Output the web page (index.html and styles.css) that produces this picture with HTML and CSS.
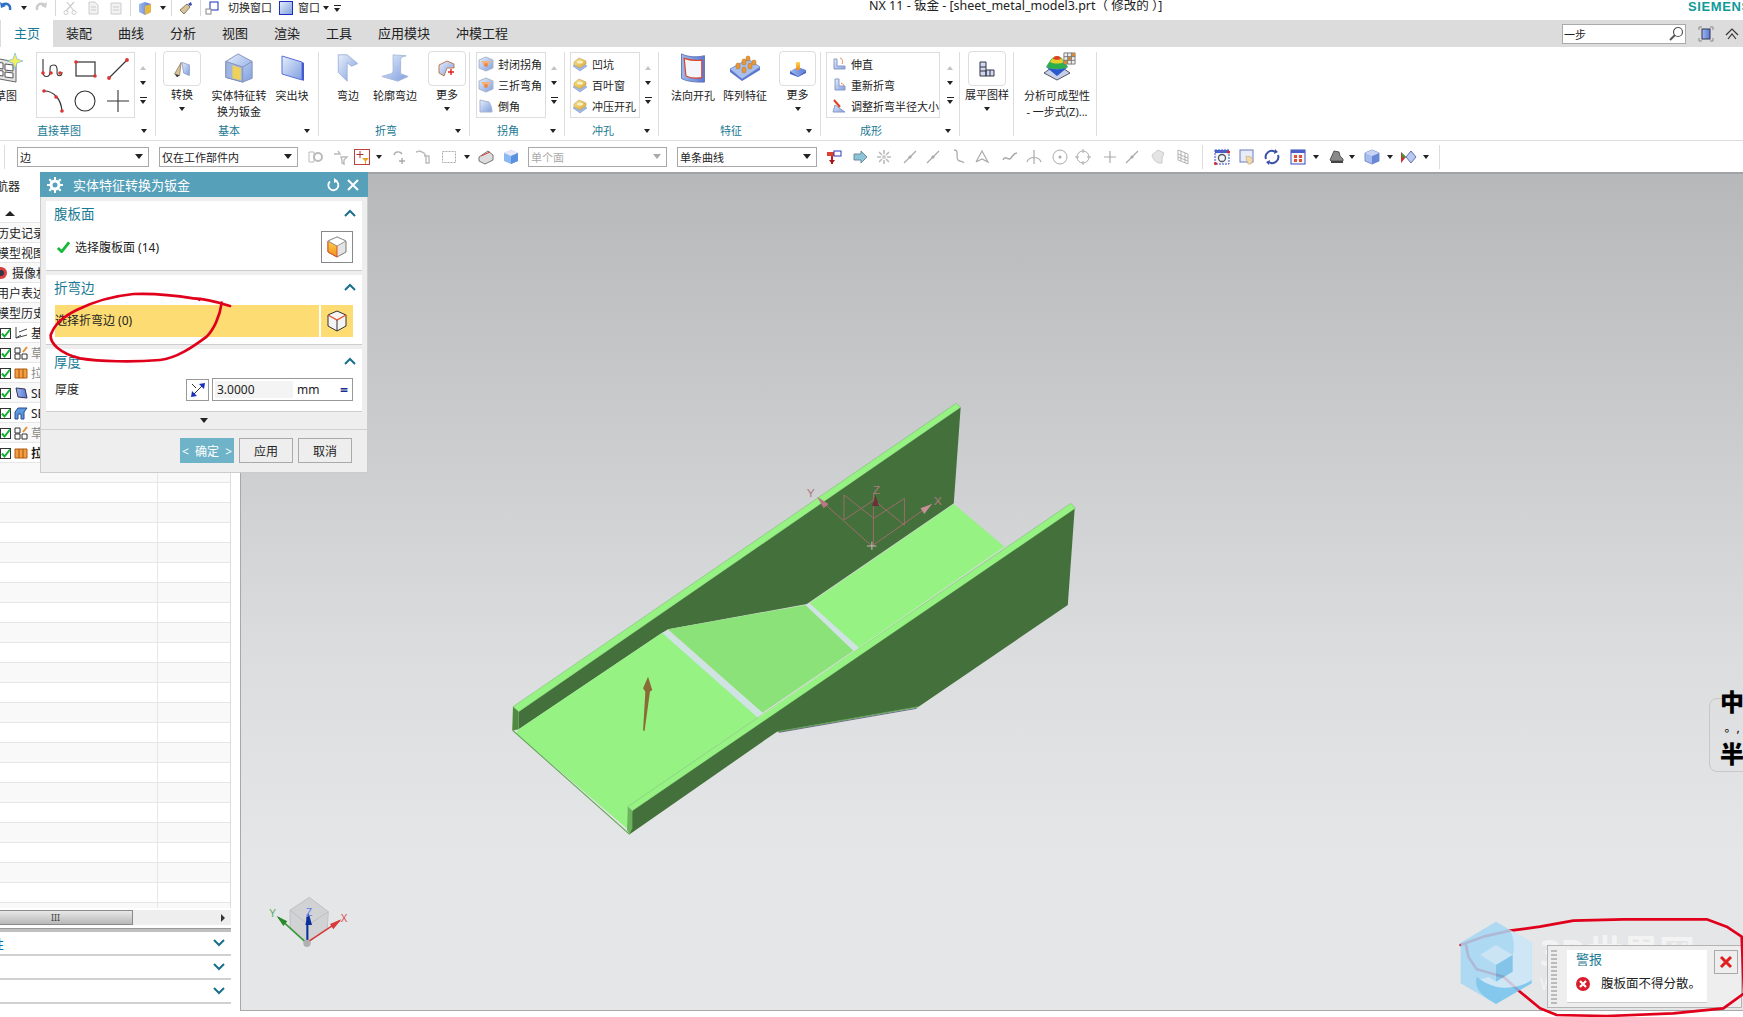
FILE: index.html
```html
<!DOCTYPE html>
<html lang="zh">
<head>
<meta charset="utf-8">
<title>NX 11 - 钣金</title>
<link rel="stylesheet" href="styles.css">
</head>
<body>
<svg class="defs" aria-hidden="true">
  <defs>
    <linearGradient id="gB" x1="0" y1="0" x2="1" y2="1"><stop offset="0" stop-color="#e6eefb"/><stop offset="1" stop-color="#7f9fe0"/></linearGradient>
    <linearGradient id="gB2" x1="0" y1="0" x2="1" y2="0"><stop offset="0" stop-color="#9fb9ea"/><stop offset="1" stop-color="#5a78d8"/></linearGradient>
    <linearGradient id="gY" x1="0" y1="0" x2="1" y2="1"><stop offset="0" stop-color="#fbe48a"/><stop offset="1" stop-color="#d9a93a"/></linearGradient>
    <linearGradient id="gO" x1="0" y1="0" x2="0" y2="1"><stop offset="0" stop-color="#ffd44a"/><stop offset="1" stop-color="#f08a20"/></linearGradient>
    <symbol id="corner" viewBox="0 0 16 16"><path d="M8 1l7 3v8l-7 3-7-3V4z" fill="url(#gB)" stroke="#a9b6cc"/><path d="M3 5h10l-3 4H6z" fill="#f2b27a"/><circle cx="8" cy="9" r="2" fill="#e88a4a"/></symbol>
    <symbol id="punch" viewBox="0 0 16 16"><path d="M8 6l7 4-7 5-7-5z" fill="#9fb9ea" stroke="#7f9bd0" stroke-width=".6"/><path d="M2 6l5-4 7 3v3l-6 4-6-3z" fill="url(#gY)" stroke="#b8a060" stroke-width=".6"/><ellipse cx="8" cy="6" rx="3" ry="1.6" fill="#f8f0c8"/></symbol>
    <symbol id="cross" viewBox="0 0 16 16"><path d="M8 2v12M2 8h12" stroke="#aaa" stroke-width="1.2" fill="none"/></symbol>
    <symbol id="line" viewBox="0 0 16 16"><path d="M2 14 14 2" stroke="#aaa" stroke-width="1.2"/><circle cx="8" cy="8" r="1.6" fill="#aaa"/></symbol>
    <symbol id="cbx" viewBox="0 0 11 11"><rect x=".5" y=".5" width="10" height="10" fill="#fff" stroke="#333"/><path d="M2 5.5 4.5 8.5 10 1.5" fill="none" stroke="#10b030" stroke-width="2"/></symbol>
    <symbol id="ext" viewBox="0 0 14 14"><path d="M1 3h12v9H1z" fill="#f0a040" stroke="#b05a10"/><path d="M5 3v9M9 3v9" stroke="#a85010"/></symbol>
    <symbol id="skt" viewBox="0 0 14 14"><path d="M1 2h5v5H1zM1 8h5v5H1zM8 8h5v5H8z" fill="#fff" stroke="#333"/><path d="M9 6l4-5" stroke="#e09030" stroke-width="2"/></symbol>
    <symbol id="chev" viewBox="0 0 12 8"><path d="M1 7 6 2l5 5" fill="none" stroke="#1a6f8c" stroke-width="2"/></symbol>
    <symbol id="chevd" viewBox="0 0 12 8"><path d="M1 1l5 5 5-5" fill="none" stroke="#1a6f8c" stroke-width="2"/></symbol>
  </defs>
</svg>

<div class="app">
  <header class="topbar">
    <div class="qa">
      <svg class="s14" viewBox="0 0 14 14"><path d="M3 4c5-3 9 0 8 5" fill="none" stroke="#2d6fc8" stroke-width="2.4"/><path d="M1 1l1 6 5-2z" fill="#2d6fc8"/></svg>
      <i class="dd"></i>
      <svg class="s14" viewBox="0 0 14 14"><path d="M11 4C6 1 2 4 3 9" fill="none" stroke="#ccc" stroke-width="2.4"/><path d="M13 1l-1 6-5-2z" fill="#ccc"/></svg>
      <b class="vsep"></b>
      <svg class="s14" viewBox="0 0 14 14"><path d="M3 10 11 1M11 10 4 1" stroke="#ccc" stroke-width="1.2"/><circle cx="3" cy="11.500" r="2" fill="none" stroke="#ccc"/><circle cx="11" cy="11.500" r="2" fill="none" stroke="#ccc"/></svg>
      <svg class="s14" viewBox="0 0 14 14"><path d="M2 1h6l3 3v9H2z" fill="#f2f2f2" stroke="#ccc"/><path d="M4 6h5M4 9h5" stroke="#ccc"/></svg>
      <svg class="s14" viewBox="0 0 14 14"><path d="M2 2h10v11H2z" fill="#f2f2f2" stroke="#ccc"/><path d="M4 6h6M4 9h6" stroke="#ccc"/></svg>
      <b class="vsep"></b>
      <svg class="s14" viewBox="0 0 14 14"><path d="M7 1l6 2v8l-6 3-6-3V3z" fill="url(#gB2)"/><path d="M7 5l6-2v8l-6 3z" fill="#e8b83a"/></svg>
      <i class="dd"></i>
      <b class="vsep"></b>
      <svg class="s14" viewBox="0 0 14 14"><path d="M1 9l7-6 3 3-6 7z" fill="#d8c49a" stroke="#8a7a60"/><path d="M9 3l3-2 1 3-2 1z" fill="#3a4ab0"/></svg>
      <b class="vsep"></b>
      <svg class="s14" viewBox="0 0 14 14"><rect x="5" y="1" width="8" height="8" fill="#fff" stroke="#1a2ec0"/><rect x="1" y="8" width="5" height="5" fill="#fff" stroke="#888"/></svg>
      <span class="qt">切换窗口</span>
      <svg class="s14" viewBox="0 0 14 14"><rect x=".5" y=".5" width="13" height="13" fill="url(#gB)" stroke="#1a2ec0"/></svg>
      <span class="qt">窗口</span>
      <i class="dd"></i>
      <i class="dd lined"></i>
    </div>
    <div class="title">NX 11 - 钣金 - [sheet_metal_model3.prt（&nbsp;修改的&nbsp;）]</div>
    <div class="brand">SIEMENS</div>
  </header>

  <nav class="tabs">
    <a class="tab on">主页</a><a class="tab">装配</a><a class="tab">曲线</a><a class="tab">分析</a><a class="tab">视图</a><a class="tab">渲染</a><a class="tab">工具</a><a class="tab">应用模块</a><a class="tab">冲模工程</a>
    <div class="tab-right">
      <div class="search"><span>一步</span><svg class="s16" viewBox="0 0 16 16"><circle cx="10" cy="6" r="4.5" fill="#fff" stroke="#555" stroke-width="1.2"/><path d="M7 9l-5 5" stroke="#555" stroke-width="2"/></svg></div>
      <svg class="s16" viewBox="0 0 16 16"><path d="M1 4V1h3M12 1h3v3M15 12v3h-3M4 15H1v-3" fill="none" stroke="#888"/><rect x="4" y="3" width="8" height="10" fill="url(#gB2)" stroke="#335"/></svg>
      <svg class="s14" viewBox="0 0 14 14"><path d="M1 8l6-6 6 6M3 12l4-5 4 5" fill="none" stroke="#333" stroke-width="1.2"/></svg>
    </div>
  </nav>

  <section class="ribbon">
    <div class="grp g1">
      <div class="body">
        <div class="lg sketch">
          <div class="ic"><svg class="s32" viewBox="0 0 32 30"><path d="M4 5l22 4v20L4 25z" fill="#e4e4e4" stroke="#666"/><path d="M6 9l7 1v6l-7-1zM15 11l8 1v6l-8-1zM6 17l7 1v5l-7-1zM15 19l8 1v5l-8-1z" fill="#fff" stroke="#555"/><path d="M25 0l2 6 6 2-6 2-2 6-2-6-6-2 6-2z" fill="#f4ef60" stroke="#5fb0e0" stroke-width=".6"/></svg></div>
          <span>草图</span>
        </div>
        <div class="gal-grid">
          <svg class="s24" viewBox="0 0 24 24"><path d="M2 2v13c0 6 7 6 7 0s0-7 4-7 3 7 3 7c0 5 5 5 5 0" fill="none" stroke="#333" stroke-width="1.1"/><circle cx="2" cy="16" r="1.8" fill="#d33"/><circle cx="10" cy="16" r="1.8" fill="#d33"/><circle cx="19" cy="16" r="1.8" fill="#d33"/></svg>
          <svg class="s24" viewBox="0 0 24 24"><rect x="3" y="5" width="19" height="14" fill="none" stroke="#333" stroke-width="1.2"/><circle cx="3" cy="5" r="1.8" fill="#d33"/><circle cx="22" cy="19" r="1.8" fill="#d33"/></svg>
          <svg class="s24" viewBox="0 0 24 24"><path d="M3 21 21 3" stroke="#333" stroke-width="1.1"/><circle cx="3" cy="21" r="1.9" fill="#d33"/><circle cx="21" cy="3" r="1.9" fill="#d33"/></svg>
          <svg class="s24" viewBox="0 0 24 24"><path d="M3 2c10 0 17 8 18 20" fill="none" stroke="#333" stroke-width="1.2"/><circle cx="3" cy="2" r="1.8" fill="#d33"/><circle cx="15" cy="8" r="1.8" fill="#d33"/><circle cx="21" cy="22" r="1.8" fill="#d33"/></svg>
          <svg class="s24" viewBox="0 0 24 24"><circle cx="12" cy="12" r="10" fill="none" stroke="#333" stroke-width="1.1"/></svg>
          <svg class="s24" viewBox="0 0 24 24"><path d="M12 1v22M1 12h22" stroke="#333" stroke-width="1.1"/></svg>
        </div>
        <div class="scr"><i class="up"></i><i class="dd"></i><i class="dd lined"></i></div>
      </div>
      <div class="foot"><span>直接草图</span><i class="dd"></i></div>
    </div>

    <div class="grp g2">
      <div class="body">
        <div class="lg w38">
          <div class="ic box"><svg class="s18" viewBox="0 0 22 22"><path d="M11 3l9 3v13l-7-3z" fill="url(#gB)" stroke="#8a9ac8"/><path d="M10 3 2 17l6 2z" fill="#d8c49a" stroke="#8a7a60"/><path d="M2 17l6 2-3 2z" fill="#333"/></svg></div>
          <span>转换</span><i class="dd"></i>
        </div>
        <div class="lg w58">
          <div class="ic"><svg class="s32" viewBox="0 0 32 32"><path d="M2 9 15 1l15 8v18l-10 4-18-5z" fill="url(#gB)" stroke="#7f8fb8"/><path d="M2 9l18 6v16L2 26z" fill="#9fb6e0" stroke="#7f8fb8"/><path d="M9 13l9 3v13l-9-2z" fill="#efd05a"/><path d="M20 15l10-6" stroke="#7f8fb8"/></svg></div>
          <span>实体特征转</span><span>换为钣金</span>
        </div>
        <div class="lg w36">
          <div class="ic"><svg class="s28" viewBox="0 0 28 28"><path d="M4 2l20 6v18L4 20z" fill="url(#gB)" stroke="#5a70d8"/><path d="M24 8l2 1v18l-2-1z" fill="#4458d0"/></svg></div>
          <span>突出块</span>
        </div>
      </div>
      <div class="foot"><span>基本</span><i class="dd"></i></div>
    </div>

    <div class="grp g3">
      <div class="body">
        <div class="lg w30">
          <div class="ic"><svg class="s28" viewBox="0 0 28 34"><path d="M3 2h10l12 10-7 3-5-4v21L3 22z" fill="url(#gB)" stroke="#9fb0d8"/></svg></div>
          <span>弯边</span>
        </div>
        <div class="lg w50">
          <div class="ic"><svg class="s32" viewBox="0 0 34 32"><path d="M15 2l14 1c-6 1-6 3-6 6v13l8 3-11 5L3 25l10-3c2-1 2-3 2-5z" fill="url(#gB)" stroke="#a8b8d8"/></svg></div>
          <span>轮廓弯边</span>
        </div>
        <div class="lg w38">
          <div class="ic box"><svg class="s18" viewBox="0 0 18 18"><path d="M1 5l8-4 7 3v4H9l-3 8-5-3z" fill="url(#gB)" stroke="#c07a50"/><path d="M10 12h6M13 9v6" stroke="#e02020" stroke-width="1.4"/></svg></div>
          <span>更多</span><i class="dd"></i>
        </div>
      </div>
      <div class="foot"><span>折弯</span><i class="dd"></i></div>
    </div>

    <div class="grp g4">
      <div class="body">
        <div class="gal w70">
          <div class="gr"><svg class="s16"><use href="#corner"/></svg><span>封闭拐角</span></div>
          <div class="gr"><svg class="s16"><use href="#corner"/></svg><span>三折弯角</span></div>
          <div class="gr"><svg class="s16" viewBox="0 0 16 16"><path d="M2 2l9 2c2 3 3 6 3 10H2z" fill="url(#gB)" stroke="#a9b6cc"/></svg><span>倒角</span></div>
        </div>
        <div class="scr"><i class="up"></i><i class="dd"></i><i class="dd lined"></i></div>
      </div>
      <div class="foot"><span>拐角</span><i class="dd"></i></div>
    </div>

    <div class="grp g5">
      <div class="body">
        <div class="gal w70">
          <div class="gr"><svg class="s16"><use href="#punch"/></svg><span>凹坑</span></div>
          <div class="gr"><svg class="s16"><use href="#punch"/></svg><span>百叶窗</span></div>
          <div class="gr"><svg class="s16"><use href="#punch"/></svg><span>冲压开孔</span></div>
        </div>
        <div class="scr"><i class="up"></i><i class="dd"></i><i class="dd lined"></i></div>
      </div>
      <div class="foot"><span>冲孔</span><i class="dd"></i></div>
    </div>

    <div class="grp g6">
      <div class="body">
        <div class="lg w46">
          <div class="ic"><svg class="s32" viewBox="0 0 30 34"><path d="M2 1c8 4 18 4 26 2v30C20 33 10 33 2 29z" fill="url(#gB2)" stroke="#5a70b0"/><path d="M5 6c6 2 14 3 20 2v20c-6 1-14 0-18-2z" fill="#f4f6fc" stroke="#d8482a" stroke-width="1.4"/></svg></div>
          <span>法向开孔</span>
        </div>
        <div class="lg w46">
          <div class="ic"><svg class="s32" viewBox="0 0 32 26"><path d="M1 14 19 4l12 8-18 12z" fill="#a9c0ee" stroke="#7f9bd0"/><path d="M1 14l12 10v2L1 17zM13 24l18-12v3L13 26z" fill="#5a78d0"/><g fill="#e8983a" stroke="#b0701a" stroke-width=".5"><rect x="7" y="8" width="4" height="6" rx="2"/><rect x="13" y="4" width="4" height="6" rx="2"/><rect x="13" y="12" width="4" height="6" rx="2"/><rect x="19" y="8" width="4" height="6" rx="2"/><rect x="17" y="1" width="4" height="5" rx="2"/><rect x="23" y="5" width="4" height="5" rx="2"/></g></svg></div>
          <span>阵列特征</span>
        </div>
        <div class="lg w37">
          <div class="ic box"><svg class="s18" viewBox="0 0 18 18"><path d="M1 11l8-4 8 3-8 6z" fill="url(#gB2)"/><path d="M1 11v3l8 3 8-4v-3l-8 6z" fill="#4a68c8"/><rect x="7" y="2" width="4" height="8" fill="url(#gO)" rx="1"/></svg></div>
          <span>更多</span><i class="dd"></i>
        </div>
      </div>
      <div class="foot"><span>特征</span><i class="dd"></i></div>
    </div>

    <div class="grp g7">
      <div class="body">
        <div class="gal w114">
          <div class="gr"><svg class="s16" viewBox="0 0 16 16"><path d="M3 13V3h3v7h8v3z" fill="url(#gB)" stroke="#8a9ac8"/><path d="M9 2c3 1 3 4 2 6" fill="none" stroke="#e0804a"/></svg><span>伸直</span></div>
          <div class="gr"><svg class="s16" viewBox="0 0 16 16"><path d="M4 13V2h4v7h6v4z" fill="url(#gB)" stroke="#8a9ac8"/><path d="M10 6c3 1 3 3 2 3" fill="none" stroke="#e0804a"/></svg><span>重新折弯</span></div>
          <div class="gr"><svg class="s16" viewBox="0 0 16 16"><path d="M2 14l2-7 10 7z" fill="url(#gB)" stroke="#8a9ac8"/><path d="M3 2l6 7" stroke="#e04020" stroke-width="2"/></svg><span>调整折弯半径大小</span></div>
        </div>
        <div class="scr"><i class="up"></i><i class="dd"></i><i class="dd lined"></i></div>
      </div>
      <div class="foot"><span>成形</span><i class="dd"></i></div>
    </div>

    <div class="grp g8">
      <div class="body">
        <div class="lg w38">
          <div class="ic box"><svg class="s18" viewBox="0 0 18 18"><path d="M2 2h6v14H2zM8 10h8v6H8z" fill="#cfd8ee" stroke="#334"/><path d="M2 7h6M2 11h6M12 10v6" stroke="#334"/></svg></div>
          <span>展平图样</span><i class="dd"></i>
        </div>
      </div>
    </div>

    <div class="grp g9">
      <div class="body">
        <div class="lg w66">
          <div class="ic analyze">
            <svg class="s28" viewBox="0 0 28 26"><path d="M14 9 27 18l-13 7L1 18z" fill="#c8d0e8" stroke="#556"/><path d="M14 1c5 0 7 5 11 11-5 3-17 3-22 0C7 6 9 1 14 1z" fill="#2fae4e"/><path d="M14 1c3 0 5 3 7 6-4 2-10 2-14 0 2-3 4-6 7-6z" fill="#e8d02a"/><path d="M14 1c2 0 3 1 4 3-2 1-6 1-8 0 1-2 2-3 4-3z" fill="#e03a2a"/><path d="M3 12c5 3 17 3 22 0l-11 9z" fill="#2a5ad0"/></svg>
            <svg class="gridico" viewBox="0 0 14 14"><path d="M1 1h12v12H1z" fill="#eee" stroke="#777"/><path d="M5 5h4v4H5zM9 1h4v4H9zM1 9h4v4H1z" fill="#d88a3a"/><path d="M5 1v12M9 1v12M1 5h12M1 9h12" stroke="#777"/></svg>
          </div>
          <span>分析可成型性</span><span>- 一步式(Z)...</span>
        </div>
      </div>
    </div>
  </section>

  <section class="selbar">
    <b class="vsep tall"></b>
    <div class="sel w132"><span>边</span><i class="dd"></i></div>
    <div class="sel w139"><span>仅在工作部件内</span><i class="dd"></i></div>
    <svg class="t" viewBox="0 0 16 16"><path d="M2 3h5v10H2z" fill="none" stroke="#bbb"/><circle cx="11" cy="8" r="4" fill="none" stroke="#bbb" stroke-width="2"/></svg>
    <svg class="t" viewBox="0 0 16 16"><path d="M2 5h6l-2-3M9 8h6l-3 3v4l-2-1v-3z" fill="none" stroke="#bbb" stroke-width="1.4"/></svg>
    <svg class="t" viewBox="0 0 16 16"><rect x=".5" y=".5" width="15" height="15" fill="#fff" stroke="#c04040"/><path d="M6 2v7M2.500 5.500h7" stroke="#a33"/><path d="M8 9h7l-3 3v3h-1v-3z" fill="#e8a020"/></svg>
    <i class="dd t2"></i>
    <svg class="t" viewBox="0 0 16 16"><path d="M2 6c1-4 6-4 8-1M10 9v6M7 12h6" fill="none" stroke="#aaa" stroke-width="1.4"/></svg>
    <svg class="t" viewBox="0 0 16 16"><path d="M1 3l4-1 4 2 2 3v7h3V7H9" fill="none" stroke="#bbb" stroke-width="1.4"/></svg>
    <svg class="t" viewBox="0 0 16 16"><rect x="1.500" y="2.500" width="13" height="11" fill="none" stroke="#aaa" stroke-dasharray="2 1"/></svg>
    <i class="dd t2"></i>
    <svg class="t" viewBox="0 0 16 16"><path d="M1 8l9-6 5 4v5l-8 4-6-3z" fill="#ddd" stroke="#777"/><path d="M3 7l9-4" stroke="#d04040"/></svg>
    <svg class="t" viewBox="0 0 16 16"><path d="M8 1l7 3v8l-7 3-7-3V4z" fill="#8ab8f0"/><path d="M1 4l7 3 7-3-7-3z" fill="#e8e8f8"/><path d="M8 7l7-3v8l-7 3z" fill="#5a90e0"/></svg>
    <div class="sel w139 off"><span>单个面</span><i class="dd"></i></div>
    <div class="sel w140"><span>单条曲线</span><i class="dd"></i></div>
    <svg class="t" viewBox="0 0 16 16"><path d="M1 3h8v4H1z" fill="#e04030"/><rect x="8" y="2" width="7" height="5" fill="#fff" stroke="#2a3ac0"/><path d="M6 7v8" stroke="#c02020" stroke-width="2"/><path d="M3 11l3 4 3-4z" fill="#a01818"/></svg>
    <svg class="t" viewBox="0 0 16 16"><path d="M2 5h7V2l6 6-6 6v-3H2z" fill="#8cc4d8" stroke="#6a8a9a"/></svg>
    <svg class="t" viewBox="0 0 16 16"><circle cx="8" cy="8" r="2" fill="#ccc"/><path d="M8 1v4M8 11v4M1 8h4M11 8h4M3 3l3 3M13 3l-3 3M3 13l3-3M13 13l-3-3" stroke="#bbb" stroke-width="1.6"/></svg>
    <svg class="t"><use href="#line"/></svg>
    <svg class="t"><use href="#line"/></svg>
    <svg class="t" viewBox="0 0 16 16"><path d="M3 1c6 0 1 7 4 10 2 2 5 1 6 3" fill="none" stroke="#aaa" stroke-width="1.3"/></svg>
    <svg class="t" viewBox="0 0 16 16"><path d="M2 13 8 2l6 11-6-3-6 3" fill="none" stroke="#aaa" stroke-width="1.2"/></svg>
    <svg class="t" viewBox="0 0 16 16"><path d="M1 11c3-6 5 2 8-2s3-5 6-5" fill="none" stroke="#aaa" stroke-width="1.5"/></svg>
    <svg class="t" viewBox="0 0 16 16"><path d="M8 1v14M1 13c2-6 12-6 14 0" fill="none" stroke="#aaa" stroke-width="1.2"/></svg>
    <svg class="t" viewBox="0 0 16 16"><circle cx="8" cy="8" r="7" fill="none" stroke="#aaa"/><circle cx="8" cy="8" r="1.500" fill="#aaa"/></svg>
    <svg class="t" viewBox="0 0 16 16"><circle cx="8" cy="8" r="6" fill="none" stroke="#aaa"/><path d="M8 0v4M8 12v4M0 8h4M12 8h4" stroke="#aaa"/></svg>
    <svg class="t"><use href="#cross"/></svg>
    <svg class="t"><use href="#line"/></svg>
    <svg class="t" viewBox="0 0 16 16"><path d="M2 6l6-5 6 3-2 5v5c-5 1-9-3-10-8z" fill="#e4e4e4" stroke="#ccc"/></svg>
    <svg class="t" viewBox="0 0 16 16"><path d="M3 1l10 4v10L3 11zM3 5l10 4M3 8l10 4M6 2v10M10 4v10" fill="none" stroke="#aaa" stroke-width=".9"/></svg>
    <b class="vsep tall"></b>
    <svg class="t" viewBox="0 0 16 16"><rect x="1" y="1" width="14" height="14" fill="#f0f4fc" stroke="#3a4ac0" stroke-dasharray="2 1"/><rect x="1" y="1" width="14" height="3" fill="#4a60c8"/><circle cx="8" cy="9" r="3.500" fill="none" stroke="#555" stroke-width="1.300"/><circle cx="1.500" cy="14.500" r="1.500" fill="#e02020"/><circle cx="14.500" cy="3" r="1.500" fill="#e02020"/></svg>
    <svg class="t" viewBox="0 0 16 16"><rect x="1" y="1" width="13" height="12" fill="#e8ecf8" stroke="#6a7ac0"/><path d="M7 9c0-3 1-2 2-1l1-1 1 1 1 0 2 3-2 4H9z" fill="#f0d8a8" stroke="#b89860" stroke-width=".5"/></svg>
    <svg class="t" viewBox="0 0 16 16"><path d="M2 10a6 6 0 0 1 9-7M14 6a6 6 0 0 1-9 7" fill="none" stroke="#3a50a8" stroke-width="2"/><path d="M11 0l3 3-4 2zM5 16l-3-3 4-2z" fill="#3a50a8"/></svg>
    <svg class="t" viewBox="0 0 16 16"><rect x="1" y="1" width="14" height="14" fill="#f4f4fc" stroke="#3a4ac0"/><rect x="1" y="1" width="14" height="3" fill="#4a60c8"/><path d="M4 6h3v3H4zM9 6h3v3H9zM4 10h3v3H4zM9 10h3v3H9z" fill="#e05030"/></svg>
    <i class="dd t2"></i>
    <svg class="t" viewBox="0 0 16 16"><path d="M2 11l4-9 5 1 1 4 3 3v2H3z" fill="#8a8a8a" stroke="#555"/><path d="M3 13h12" stroke="#444" stroke-width="2"/></svg>
    <i class="dd t2"></i>
    <svg class="t" viewBox="0 0 16 16"><path d="M8 1l7 3v8l-7 3-7-3V4z" fill="#a8bcf0" stroke="#7a90c8"/><path d="M8 7l7-3v8l-7 3z" fill="#6a88d8"/><path d="M1 4l7 3 7-3-7-3z" fill="#c8d4f4"/></svg>
    <i class="dd t2"></i>
    <svg class="t" viewBox="0 0 16 16"><path d="M1 3l5 5-5 6z" fill="#d03030"/><path d="M1 3l5 5-3 1z" fill="#30a040"/><path d="M11 2l5 6-5 6-5-6z" fill="#b8c8f0" stroke="#6070b0"/></svg>
    <i class="dd t2"></i>
    <b class="vsep tall"></b>
  </section>

  <main class="main">
    <aside class="nav">
      <div class="nav-title">航器</div>
      <div class="table">
        <div class="row head"><i class="up dark"></i></div>
        <div class="row"><span class="clip">历史记录</span></div>
        <div class="row"><span class="clip">模型视图</span></div>
        <div class="row"><svg class="s14 cam" viewBox="0 0 14 14"><circle cx="7" cy="7" r="6" fill="#d84040"/><circle cx="7" cy="7" r="3" fill="#334"/></svg><span>摄像机</span></div>
        <div class="row"><span class="clip">用户表达式</span></div>
        <div class="row"><span class="clip">模型历史记录</span></div>
        <div class="row"><svg class="c"><use href="#cbx"/></svg><svg class="s14" viewBox="0 0 14 14"><path d="M2 1v11l5-3M2 12l11-3M5 6l8-3" fill="none" stroke="#444"/></svg><span>基准坐标系</span></div>
        <div class="row"><svg class="c"><use href="#cbx"/></svg><svg class="s14"><use href="#skt"/></svg><span class="dim">草图</span></div>
        <div class="row"><svg class="c"><use href="#cbx"/></svg><svg class="s14"><use href="#ext"/></svg><span class="dim">拉伸</span></div>
        <div class="row"><svg class="c"><use href="#cbx"/></svg><svg class="s14" viewBox="0 0 14 14"><path d="M2 2l9 1 2 9-9-1z" fill="url(#gB2)" stroke="#335"/></svg><span>SB</span></div>
        <div class="row"><svg class="c"><use href="#cbx"/></svg><svg class="s14" viewBox="0 0 14 14"><path d="M1 6l3-4h9l-3 4v7H7V8H4v5H1z" fill="#5a98e0" stroke="#2a4a90"/></svg><span>SB</span></div>
        <div class="row"><svg class="c"><use href="#cbx"/></svg><svg class="s14"><use href="#skt"/></svg><span class="dim">草图</span></div>
        <div class="row"><svg class="c"><use href="#cbx"/></svg><svg class="s14"><use href="#ext"/></svg><b>拉伸</b></div>
        <div class="row"></div><div class="row"></div><div class="row"></div><div class="row"></div><div class="row"></div><div class="row"></div><div class="row"></div><div class="row"></div><div class="row"></div><div class="row"></div><div class="row"></div><div class="row"></div><div class="row"></div><div class="row"></div><div class="row"></div><div class="row"></div><div class="row"></div><div class="row"></div><div class="row"></div><div class="row"></div><div class="row"></div><div class="row"></div><div class="row"></div><div class="row"></div>
      </div>
      <div class="hscroll"><div class="thumb">III</div><i class="right"></i></div>
      <div class="splitter"></div>
      <div class="panel"><span>性</span><svg class="chev"><use href="#chevd"/></svg></div>
      <div class="panel"><span></span><svg class="chev"><use href="#chevd"/></svg></div>
      <div class="panel"><span></span><svg class="chev"><use href="#chevd"/></svg></div>
    </aside>

    <div class="viewport">
      <svg class="model" viewBox="0 0 1568 1380" preserveAspectRatio="none">
        <polygon points="75,965 1230,52 1212,340 828,642 465,718 445,732 75,1018" fill="#44703b"/>
        <polygon points="60,950 1218,40 1230,52 75,965" fill="#95f283" stroke="#5fa652" stroke-width="1"/>
        <polygon points="60,950 75,965 75,1018 58,1022" fill="#4f8a42"/>
        <polygon points="75,1018 450,728 700,982 360,1250 360,1318 68,1030" fill="#95f283"/>
        <polygon points="465,718 825,645 950,782 712,968" fill="#8ae278"/>
        <polygon points="835,640 1212,342 1345,470 962,775" fill="#95f283"/>
        <polygon points="450,728 465,722 712,968 697,980" fill="#cfe3e3"/>
        <polygon points="825,645 835,640 963,772 950,782" fill="#cfe3e3"/>
        <polygon points="372,1262 1528,355 1510,645 1120,950 750,1025 365,1333" fill="#44703b"/>
        <polygon points="360,1250 1518,340 1530,355 372,1262" fill="#95f283" stroke="#5fa652" stroke-width="1"/>
        <polygon points="360,1250 372,1262 372,1315 365,1333 358,1320" fill="#6cb45c"/>
        <path d="M60 1022 365 1333M750 1025 1120 950" stroke="#5fa652" stroke-width="3" fill="none"/>
        <path d="M755 1027 1115 955" stroke="#39405a" stroke-width="2" fill="none"/>
        <path d="M700 985 1345 470" stroke="#b8f5ac" stroke-width="2" fill="none"/>
        <polygon points="400,1022 404,1022 418,905 424,900 413,860 400,895 406,905" fill="#8b6b35"/>
        <g stroke="#a86a72" stroke-width="2.500" fill="none">
          <path d="M858 325 998 468 1155 342M1002 310V468"/>
          <path d="M925 390V315L1003 385 1083 325V405L1003 330 925 390"/>
          <path d="M985 468h25M998 455v25" stroke="#d8c0c0"/>
        </g>
        <polygon points="855,320 885,342 872,355" fill="#b87880"/>
        <polygon points="1155,342 1125,355 1135,372" fill="#c89098"/>
        <polygon points="1008,316 1016,348 998,348" fill="#6a3038"/>
        <text class="wcs" x="828" y="322" textLength="22">Y</text>
        <text class="wcs" x="1000" y="312" textLength="20">Z</text>
        <text class="wcs" x="1160" y="345" textLength="22">X</text>
      </svg>

      <svg class="triad" viewBox="780 90 270 180">
        <path d="M928 112 985 155 982 205 922 250 870 205 870 150z" fill="#d0d2d4" stroke="#b4b6b8" stroke-width="2"/>
        <path d="M870 150 925 195 985 155M925 195V250" stroke="#b4b6b8" stroke-width="2" fill="none"/>
        <path d="M915 245 835 172" stroke="#3a9a3a" stroke-width="5"/><polygon points="830,168 862,184 850,198" fill="#2a8a2a"/>
        <path d="M925 245 1020 182" stroke="#d83a3a" stroke-width="5"/><polygon points="1024,178 990,192 1000,208" fill="#d83a3a"/>
        <path d="M922 248V170" stroke="#0a2f9a" stroke-width="6"/><polygon points="926,160 936,195 916,195" fill="#0a2f9a"/>
        <circle cx="921" cy="250" r="11" fill="#b0b0b0"/>
        <text class="ax gy" x="808" y="170">Y</text><text class="ax rx" x="1022" y="186">X</text><text class="ax bz" x="918" y="168">Z</text>
      </svg>

      <div class="sticker"><span>中</span><span class="sm">。,</span><span>半</span></div>
      <div class="wm"><span class="wm1">3D世界网</span><span class="wm2">WWW.3DSJW.COM</span></div>

      <div class="notice">
        <div class="grip"></div>
        <div class="msg">
          <div class="msg-h">警报</div>
          <div class="msg-b">
            <svg class="s14" viewBox="0 0 14 14"><circle cx="7" cy="7" r="7" fill="#d81e2c"/><path d="M4 4l6 6M10 4l-6 6" stroke="#fff" stroke-width="2.200"/></svg>
            <span>腹板面不得分散。</span>
          </div>
        </div>
        <div class="msg-x"><svg class="s14" viewBox="0 0 14 14"><path d="M2 2l10 10M12 2 2 12" stroke="#e02020" stroke-width="3"/></svg></div>
      </div>
    </div>

    <div class="dialog">
      <div class="dlg-h">
        <svg class="s16" viewBox="0 0 16 16"><circle cx="8" cy="8" r="4" fill="none" stroke="#fff" stroke-width="3"/><path d="M8 0v3M8 13v3M0 8h3M13 8h3M2.300 2.300l2 2M11.700 11.700l2 2M13.700 2.300l-2 2M4.300 11.700l-2 2" stroke="#fff" stroke-width="2"/></svg>
        <span class="dlg-t">实体特征转换为钣金</span>
        <svg class="s14 reset" viewBox="0 0 14 14"><path d="M9 2.500a5 5 0 1 1-5 1" fill="none" stroke="#fff" stroke-width="1.800"/><path d="M8 0l4 3-4 2z" fill="#fff"/></svg>
        <svg class="s14" viewBox="0 0 14 14"><path d="M2 2l10 10M12 2 2 12" stroke="#fff" stroke-width="2"/></svg>
      </div>
      <div class="sec s1">
        <div class="sec-h"><span>腹板面</span><svg class="chev"><use href="#chev"/></svg></div>
        <div class="sec-r">
          <svg class="tick" viewBox="0 0 14 12"><path d="M1 7l4 4 8-10" fill="none" stroke="#18b83a" stroke-width="3"/></svg>
          <span class="lab">选择腹板面 (14)</span>
          <div class="cube-btn"><svg class="s22" viewBox="0 0 22 22"><path d="M11 1l9 4v11l-9 5-9-5V5z" fill="#e4e4e4" stroke="#777"/><path d="M2 5l9 5v11l-9-5z" fill="url(#gO)" stroke="#e05020"/><path d="M2 5l9-4 9 4-9 5z" fill="#fff" stroke="#999"/></svg></div>
        </div>
      </div>
      <div class="sec s2">
        <div class="sec-h"><span>折弯边</span><svg class="chev"><use href="#chev"/></svg></div>
        <div class="sec-r hot">
          <span class="lab hl">选择折弯边 (0)</span>
          <div class="cube-btn yl"><svg class="s22" viewBox="0 0 22 22"><path d="M11 1l9 4v11l-9 5-9-5V5z" fill="#f4f4f4" stroke="#333"/><path d="M2 5l9 5 9-5" fill="none" stroke="#e05020" stroke-width="1.200"/><path d="M11 10v11" stroke="#333"/></svg></div>
        </div>
      </div>
      <div class="sec s3">
        <div class="sec-h"><span>厚度</span><svg class="chev"><use href="#chev"/></svg></div>
        <div class="sec-r">
          <span class="lab thick">厚度</span>
          <div class="dim-btn"><svg class="s16" viewBox="0 0 16 16"><path d="M2 14 14 2" stroke="#333"/><path d="M2 2l4 4" stroke="#333"/><path d="M15 1l-1 6-5-5zM1 15l1-6 5 5z" fill="#1a2ec0"/></svg></div>
          <div class="inp"><span class="val">3.0000</span><span class="unit">mm</span><span class="eq">=</span></div>
        </div>
      </div>
      <div class="more"><i class="dd"></i></div>
      <div class="dlg-f">
        <button class="btn ok">&lt;&nbsp;&nbsp;确定&nbsp;&nbsp;&gt;</button>
        <button class="btn">应用</button>
        <button class="btn">取消</button>
      </div>
    </div>
  </main>
  <footer class="status"></footer>
</div>

<svg class="marks" viewBox="0 0 1743 1017">
  <g transform="translate(0 170) scale(.33333)">
    <path class="pen" d="M690 408C640 392 600 385 580 385 520 375 450 370 400 372 340 378 280 395 230 420 190 440 165 460 152 495 150 520 180 550 240 565 300 575 400 577 480 570 530 565 580 530 620 500 640 480 660 440 665 398"/>
    <path d="M578 382l30 4-10 8z" fill="#e0001b"/>
  </g>
  <g transform="translate(1440 660) scale(.33333)">
    <path class="pen" d="M62 855 130 830 210 812 300 800 400 782 550 778 800 778 860 800 905 830 912 1000 850 1045 700 1060 500 1068 350 1065 300 1045 240 995 190 950 110 928 85 890 78 855"/>
    <g opacity=".86">
      <path d="M168 785 275 848V970L168 1032 62 970V848z" fill="#a6d8f4"/>
      <path d="M168 785 275 848V970C240 990 180 1000 110 960 180 950 250 900 210 810z" fill="#cbe7f8"/>
      <path d="M110 950C170 1000 240 985 275 960V970L168 1032C130 1010 100 990 110 950z" fill="#76c4ee"/>
      <path d="M168 855 218 885 168 915 120 885z" fill="#c6e4f7"/>
      <path d="M120 885 168 915V965L120 935z" fill="#a8d8f4"/>
      <path d="M168 915 218 885V935L168 965z" fill="#74bfe8"/>
    </g>
  </g>
</svg>
</body>
</html>
```

FILE: styles.css
```css
* { box-sizing: border-box; }
html, body { margin: 0; padding: 0; }
body {
  width: 1743px;
  height: 1017px;
  overflow: hidden;
  position: relative;
  background: #fff;
  color: #222;
  font-family: "Noto Sans", "Noto Sans CJK SC", sans-serif;
  font-size: 11px;
}
.defs { display: block; width: 0; height: 0; }
i, b { display: block; font-style: normal; }
svg { display: block; flex: none; }
.s14 { width: 14px; height: 14px; }
.s16 { width: 16px; height: 16px; }
.s18 { width: 18px; height: 18px; }
.s22 { width: 22px; height: 22px; }
.s24 { width: 24px; height: 24px; }
.s28 { width: 28px; height: 30px; }
.s32 { width: 32px; height: 30px; }

.dd {
  width: 0;
  height: 0;
  border-left: 3.500px solid transparent;
  border-right: 3.500px solid transparent;
  border-top: 4px solid #222;
}
.dd.lined { position: relative; margin-top: 3px; }
.dd.lined::before {
  content: "";
  position: absolute;
  left: -3.500px;
  top: -7px;
  width: 7px;
  height: 1px;
  background: #222;
}
.up {
  width: 0;
  height: 0;
  border-left: 3.500px solid transparent;
  border-right: 3.500px solid transparent;
  border-bottom: 4px solid #c4c4c4;
}
.up.dark { border-bottom-color: #222; border-left-width: 5px; border-right-width: 5px; border-bottom-width: 5px; margin-left: 5px; }

.app {
  width: 1743px;
  height: 1017px;
  display: grid;
  grid-template-rows: 20px 27px 94px 31px 839px 6px;
}

/* title bar */
.topbar { display: flex; overflow: hidden; background: #fff; }
.qa {
  width: 869px;
  height: 10px;
  padding-left: 6px;
  display: grid;
  grid-auto-flow: column;
  grid-template-columns: 18px 17px 14px 15px 24px 22px 14px 15px 18px 8px 15px 14px 12px 16px 58px 12px 28px 11px 20px;
  align-items: center;
}
.qa > svg { margin-left: -7px; }
.qa > .dd { margin-left: -3px; }
.qt { font-size: 11px; white-space: nowrap; line-height: 12px; }
.vsep { width: 1px; height: 16px; background: #d8d8d8; }
.vsep.tall { height: 24px; background: #dcdcdc; }
.title { flex: 1; font-size: 12.500px; line-height: 12px; white-space: nowrap; color: #222; }
.brand { width: 55px; font-size: 13px; line-height: 14px; font-weight: 700; color: #0f9a9a; font-family: "Liberation Sans", sans-serif; white-space: nowrap; letter-spacing: .6px; }

/* tabs */
.tabs { display: flex; align-items: stretch; background: #dcdcdc; padding-left: 1px; }
.tab { padding: 0 13px; font-size: 13px; line-height: 26px; color: #222; white-space: nowrap; }
.tab.on { width: 52px; background: #fff; color: #1a7a94; text-align: center; padding: 0; }
.tab-right { margin-left: auto; display: flex; align-items: center; padding-right: 4px; }
.search {
  width: 124px;
  height: 20px;
  margin-right: 12px;
  padding: 0 1px;
  background: #fff;
  border: 1px solid #aaa;
  display: flex;
  align-items: center;
  justify-content: space-between;
  font-size: 11px;
}
.tab-right > .s14 { margin-left: 11px; }

/* ribbon */
.ribbon { display: flex; background: #fff; padding-top: 5px; border-bottom: 1px solid #ddd; align-items: flex-start; }
.grp {
  height: 84px;
  display: grid;
  grid-template-rows: 72px 12px;
  border-right: 1px solid #ddd;
}
.g1 { width: 156px; } .g2 { width: 163px; } .g3 { width: 151px; } .g4 { width: 95px; } .g5 { width: 94px; }
.g6 { width: 162px; } .g7 { width: 139px; } .g8 { width: 54px; } .g9 { width: 83px; }
.body { display: flex; align-items: flex-start; }
.foot { display: flex; align-items: center; height: 14px; padding-right: 8px; color: #1a7a94; line-height: 14px; }
.foot .dd { margin-left: auto; }
.g1 .foot { padding-left: 37px; } .g2 .foot { padding-left: 62px; } .g3 .foot { padding-left: 56px; }
.g4 .foot { padding-left: 27px; } .g5 .foot { padding-left: 27px; } .g6 .foot { padding-left: 61px; } .g7 .foot { padding-left: 39px; }

.lg { display: flex; flex-direction: column; align-items: center; white-space: nowrap; line-height: 16px; }
.lg .dd { margin-top: 4px; }
.ic { height: 36px; width: 100%; display: flex; align-items: center; justify-content: center; }
.ic > .s28, .ic > .s32 { margin-top: -4px; }
.box { height: 35px; margin-bottom: 1px; margin-top: -1px; border: 1px solid #ddd; border-radius: 4px; }
.w30 { width: 30px; } .w36 { width: 36px; } .w37 { width: 37px; } .w38 { width: 38px; } .w46 { width: 46px; }
.w50 { width: 50px; } .w58 { width: 58px; } .w66 { width: 66px; }
.sketch { width: 26px; margin-left: -7px; }
.sketch .s32 { overflow: visible; }
.g2 .lg:nth-child(1) { margin-left: 7px; } .g2 .lg:nth-child(2) { margin-left: 9px; } .g2 .lg:nth-child(3) { margin-left: 6px; }
.g3 .lg:nth-child(1) { margin-left: 14px; } .g3 .lg:nth-child(2) { margin-left: 7px; } .g3 .lg:nth-child(3) { margin-left: 8px; }
.g6 .lg:nth-child(1) { margin-left: 11px; } .g6 .lg:nth-child(2) { margin-left: 6px; } .g6 .lg:nth-child(3) { margin-left: 11px; }
.g8 .lg { margin-left: 8px; }
.g9 .lg { margin-left: 10px; }
.analyze { position: relative; }
.gridico { position: absolute; right: 14px; top: 0; width: 13px; height: 13px; }

.gal-grid {
  width: 99px;
  height: 66px;
  margin-left: 17px;
  border: 1px solid #ddd;
  display: grid;
  grid-template-columns: repeat(3, 1fr);
  grid-template-rows: repeat(2, 1fr);
  place-items: center;
}
.scr { width: 14px; height: 66px; margin-left: 1px; display: flex; flex-direction: column; align-items: center; justify-content: space-around; padding: 8px 0 8px; }
.gal { height: 66px; border: 1px solid #ddd; display: grid; grid-template-rows: repeat(3, 1fr); padding: 0 0 1px 1px; }
.w70 { width: 70px; } .w114 { width: 114px; }
.gr { display: flex; align-items: center; gap: 4px; white-space: nowrap; }
.g4 .gal { margin-left: 6px; } .g5 .gal { margin-left: 5px; } .g7 .gal { margin-left: 5px; }
.g7 .gal .gr { padding-left: 3px; } .g7 .scr { margin-left: 3px; }

/* selection bar */
.selbar {
  padding-left: 4px;
  display: grid;
  grid-auto-flow: column;
  grid-template-columns: 13px 142px 156px 25px 22px 17px 21px 23px 26px 18px 19px 25px 17px 149px 157px 26px 24px 26px 23px 26px 23px 28px 24px 26px 23px 27px 22px 26px 25px 19px 20px 25px 25px 26px 18px 20px 16px 20px 18px 18px 18px 13px 1px;
  justify-content: start;
  align-items: center;
  background: #fff;
}
.t { width: 16px; height: 16px; margin-left: -8px; overflow: visible; }
.t2 { margin-left: -3px; }
.sel {
  height: 20px;
  border: 1px solid #a8a8a8;
  display: flex;
  align-items: center;
  justify-content: space-between;
  padding: 0 5px 0 2px;
  font-size: 11px;
  white-space: nowrap;
}
.sel .dd { border-top-width: 5px; border-left-width: 4.500px; border-right-width: 4.500px; }
.w132 { width: 132px; } .w139 { width: 139px; } .w140 { width: 140px; }
.sel.off { color: #aaa; }
.sel.off .dd { border-top-color: #aaa; }

/* main */
.main { position: relative; display: flex; height: 839px; }
.nav { width: 240px; display: flex; flex-direction: column; padding-right: 9px; background: #fff; overflow: hidden; }
.nav-title { height: 31px; flex: none; line-height: 30px; font-size: 12px; margin-left: -4px; white-space: nowrap; }
.table { height: 705px; flex: none; border-right: 1px solid #ddd; overflow: hidden; }
.row {
  height: 20px;
  display: flex;
  align-items: center;
  gap: 3px;
  padding-top: 1px;
  border-bottom: 1px solid #e6e6e6;
  font-size: 12px;
  white-space: nowrap;
  background: linear-gradient(to right, transparent 157px, #e6e6e6 157px, #e6e6e6 158px, transparent 158px);
}
.row:nth-child(even) { background-color: #f9f9f9; }
.row.head { height: 20px; }
.clip { margin-left: -3px; }
.cam { margin-left: -6px; margin-right: 1px; }
.row .c { width: 11px; height: 11px; }
.row .dim { color: #888; }
.hscroll { height: 15px; flex: none; margin-top: 2px; display: flex; background: #eee; position: relative; align-items: center; }
.thumb {
  width: 133px;
  height: 15px;
  border: 1px solid #8a8a8a;
  border-left: 0;
  background: linear-gradient(#e8e8e8, #b8b8b8);
  font-size: 9px;
  line-height: 13px;
  color: #444;
  padding-left: 51px;
}
.right { margin-left: auto; margin-right: 6px; width: 0; height: 0; border-top: 4px solid transparent; border-bottom: 4px solid transparent; border-left: 4px solid #333; }
.splitter { height: 4px; margin-top: 3px; background: #c0c0c0; border-top: 1px solid #999; flex: none; }
.panel {
  height: 24px;
  flex: none;
  display: flex;
  align-items: center;
  justify-content: space-between;
  border-bottom: 2px solid #d0d0d0;
  padding-right: 6px;
  color: #0a76b0;
  font-size: 13px;
}
.panel span { margin-left: -9px; }
.chev { width: 12px; height: 8px; }

.viewport {
  position: relative;
  flex: 1;
  border-left: 1px solid #a8a8a8;
  border-top: 2px solid #a0a4a6;
  border-bottom: 1px solid #a8a8a8;
  background: linear-gradient(#b6b8ba 0, #dcdddf 58%, #e5e6e8 82%);
  overflow: hidden;
}
.model { position: absolute; left: 249px; top: 216px; width: 600px; height: 460px; }
.wcs { font-size: 32px; fill: #b07a80; font-family: "Liberation Sans", sans-serif; }
.triad { position: absolute; left: 19px; top: 716px; width: 90px; height: 60px; }
.ax { font-size: 30px; font-family: "Liberation Sans", sans-serif; }
.gy { fill: #5aa85a; } .rx { fill: #d84a4a; } .bz { fill: #5a78f0; }
.sticker {
  position: absolute;
  left: 1468px;
  top: 524px;
  width: 60px;
  height: 74px;
  border: 1px solid #c8c8c8;
  border-radius: 8px;
  display: flex;
  flex-direction: column;
  align-items: center;
  padding-right: 14px;
  color: #000;
  font-size: 24px;
  font-weight: 900;
  line-height: 26px;
}
.sticker span:first-child { margin-top: -10px; }
.sticker .sm { font-size: 12px; line-height: 26px; font-weight: 400; }
.wm { position: absolute; left: 1299px; top: 758px; display: flex; flex-direction: column; color: #fff; opacity: .55; }
.wm1 { font-size: 36px; line-height: 42px; font-weight: 700; white-space: nowrap; }
.wm2 { font-size: 16px; line-height: 20px; letter-spacing: 3px; white-space: nowrap; }

.notice {
  position: absolute;
  right: 1px;
  bottom: 2px;
  width: 195px;
  height: 63px;
  background: #eeeeef;
  border: 1px solid #b4b4b4;
  display: flex;
  align-items: flex-start;
}
.grip {
  width: 6px;
  height: 56px;
  margin: 3px 0 0 3px;
  background-image: radial-gradient(circle, #bbb 1.200px, transparent 1.300px);
  background-size: 3px 4px;
}
.msg {
  width: 140px;
  height: 53px;
  margin: 4px 0 0 10px;
  background: #fff;
  border-bottom: 1px solid #ccc;
  padding: 0 0 0 9px;
  flex: none;
}
.msg-h { font-size: 13px; line-height: 18px; color: #1a7a94; }
.msg-b { display: flex; align-items: center; gap: 11px; margin-top: 8px; font-size: 12.500px; line-height: 16px; white-space: nowrap; }
.msg-x {
  width: 24px;
  height: 24px;
  margin: 4px 0 0 7px;
  border: 1px solid #aaa;
  display: flex;
  align-items: center;
  justify-content: center;
}

/* dialog */
.dialog {
  position: absolute;
  left: 40px;
  top: 0;
  width: 328px;
  height: 301px;
  background: #eee;
  border: 1px solid #ccc;
  border-top: 0;
  display: flex;
  flex-direction: column;
}
.dlg-h {
  height: 25px;
  margin: 0 -1px;
  flex: none;
  background: #56a0b9;
  color: #fff;
  display: flex;
  align-items: center;
  padding: 0 8px 0 5px;
}
.dlg-h .s16 { margin-left: 2px; }
.dlg-t { margin-left: 10px; font-size: 13px; flex: 1; }
.reset { margin-right: 6px; }
.sec { margin: 4px 5px 0; background: #fff; border-bottom: 1px solid #ccc; flex: none; }
.s1 { height: 70px; } .s2 { height: 70px; } .s3 { height: 63px; }
.sec-h { height: 23px; padding: 0 6px 0 8px; display: flex; align-items: center; justify-content: space-between; font-size: 13.500px; color: #1a7a94; }
.sec-r { display: flex; align-items: center; padding: 0 9px; font-size: 12px; }
.s1 .sec-r { padding-left: 11px; margin-top: 7px; }
.lab { flex: 1; white-space: nowrap; }
.tick { width: 13px; height: 12px; margin-right: 5px; }
.cube-btn { width: 32px; height: 32px; border: 1px solid #888; display: flex; align-items: center; justify-content: center; flex: none; background: #fff; }
.s2 .sec-r { margin-top: 7px; gap: 2px; padding-left: 9px; }
.hl { height: 32px; line-height: 32px; background: #fddc73; padding-left: 0; }
.cube-btn.yl { border: 0; background: #fddc73; }
.s3 .sec-r { padding-left: 9px; margin-top: 6px; }
.thick { flex: none; width: 131px; margin-top: -1px; }
.dim-btn { width: 23px; height: 22px; border: 1px solid #999; display: flex; align-items: center; justify-content: center; margin-right: 3px; }
.inp { width: 141px; height: 23px; border: 1px solid #999; display: flex; align-items: center; padding: 2px; font-size: 12px; }
.val { width: 78px; height: 100%; background: #f4f4f4; padding-left: 2px; line-height: 17px; }
.unit { margin-left: 4px; flex: 1; }
.eq { color: #1a2e90; font-size: 14px; font-weight: 700; padding-right: 2px; }
.more { height: 18px; display: flex; align-items: center; justify-content: center; flex: none; border-bottom: 1px solid #d0d0d0; }
.more .dd { border-top-width: 5px; border-left-width: 4px; border-right-width: 4px; }
.dlg-f { display: flex; gap: 5px; padding: 8px 15px 0 139px; }
.btn {
  width: 54px;
  height: 25px;
  padding: 0;
  background: #eee;
  border: 1px solid #aaa;
  font: inherit;
  font-size: 12px;
  color: #222;
  white-space: nowrap;
}
.btn.ok { background: #6fb3c9; border-color: #6fb3c9; color: #fff; }

.status { background: #fff; }

/* hand-drawn annotations lying over everything */
.marks { position: absolute; left: 0; top: 0; width: 1743px; height: 1017px; pointer-events: none; }
.pen { fill: none; stroke: #e0001b; stroke-width: 8; stroke-linecap: round; stroke-linejoin: round; }
```
